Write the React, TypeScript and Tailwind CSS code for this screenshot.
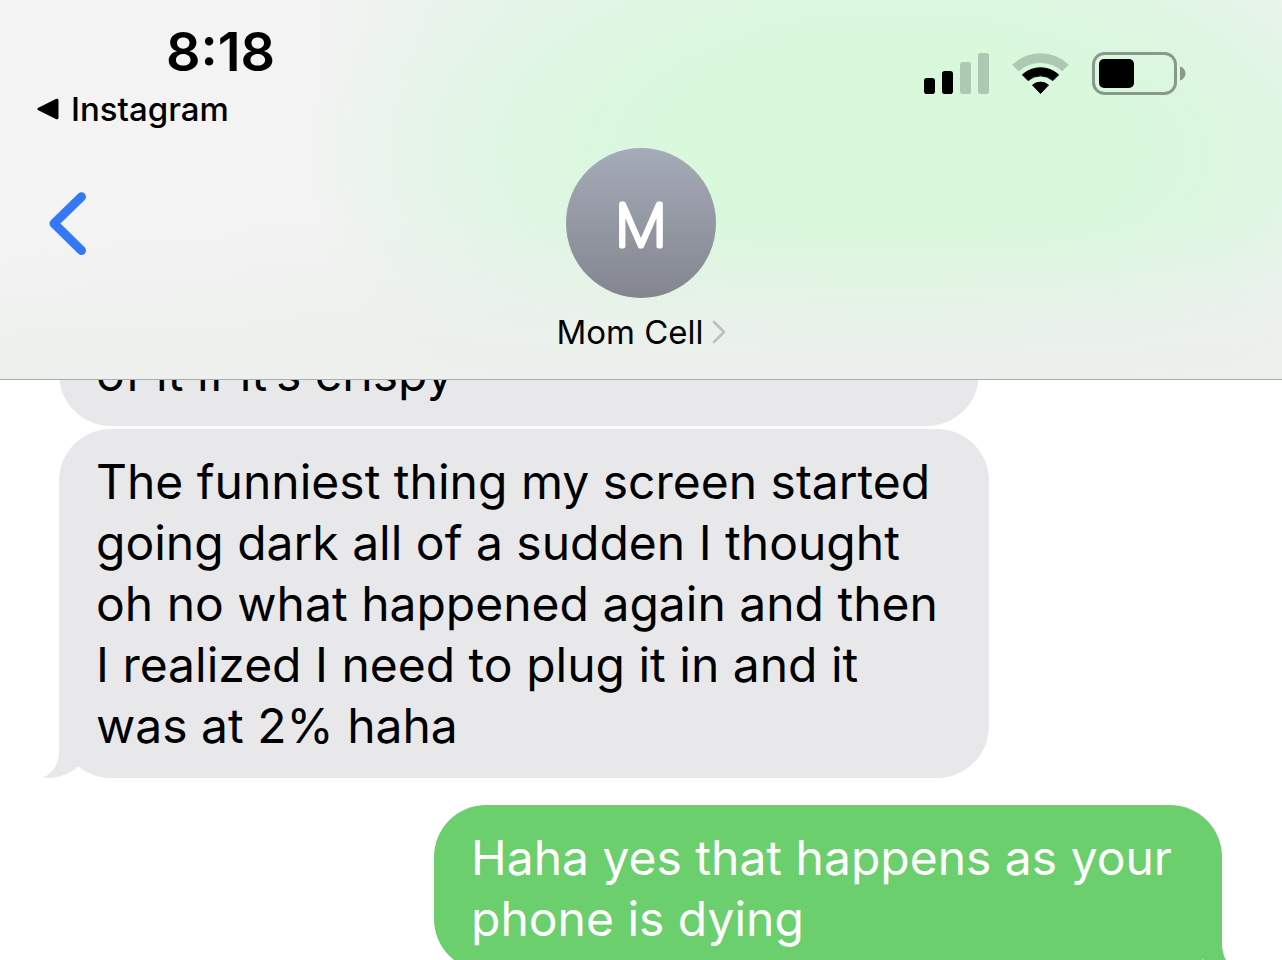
import type { ReactNode } from "react";

function SignalIcon() {
  return (
    <svg width="65" height="43" viewBox="0 0 65 43" role="img" aria-label="Signal: two of four bars">
      <rect x="0" y="26" width="11" height="16" rx="2.8" fill="#000" />
      <rect x="18" y="19" width="11" height="23" rx="2.8" fill="#000" />
      <rect x="36" y="10" width="11" height="32" rx="2.8" fill="#afc8b3" />
      <rect x="54" y="1" width="11" height="41" rx="2.8" fill="#afc8b3" />
    </svg>
  );
}

function WifiIcon() {
  return (
    <svg width="57" height="43" viewBox="0 0 57 43" role="img" aria-label="Wi-Fi">
      <g strokeLinejoin="round" strokeWidth="1">
        <path
          d="M0.7 12.8 A40.5 40.5 0 0 1 56.3 12.8 L50.3 18.8 A32.6 32.6 0 0 0 6.7 18.8 Z"
          fill="#afc8b3"
          stroke="#afc8b3"
        />
        <path
          d="M10.4 22.8 A26.8 26.8 0 0 1 46.6 22.8 L40.9 28.6 A18.6 18.6 0 0 0 16.1 28.6 Z"
          fill="#000"
          stroke="#000"
        />
        <path d="M20.5 33 A12.5 12.5 0 0 1 36.5 33 L28.5 41.5 Z" fill="#000" stroke="#000" />
      </g>
    </svg>
  );
}

function BatteryIcon() {
  return (
    <svg width="94" height="43" viewBox="0 0 94 43" role="img" aria-label="Battery">
      <rect x="1.5" y="1.5" width="82" height="40" rx="11" fill="none" stroke="#879a8b" strokeWidth="3" />
      <rect x="7" y="7" width="35" height="29" rx="5" fill="#000" />
      <path d="M88 14.5 C91.5 15.5 93.5 18.2 93.5 21.5 C93.5 24.8 91.5 27.5 88 28.5 Z" fill="#879a8b" />
    </svg>
  );
}

function Tail({ side }: { side: "left" | "right" }) {
  return (
    <svg
      className={
        side === "left"
          ? "absolute bottom-0 -left-4 text-[#e8e8ea]"
          : "absolute -right-4 bottom-0 -scale-x-100 text-[#6bcf6e]"
      }
      width="36"
      height="52"
      viewBox="0 0 36 52"
      aria-hidden="true"
    >
      <path
        d="M16 0 L16 24 C16 38 10 47.5 0 51.4 C13 53.5 26 48.5 35 40.5 L36 30 L17 0 Z"
        fill="currentColor"
      />
    </svg>
  );
}

function Bubble({ className, children }: { className: string; children: ReactNode }) {
  return (
    <li
      className={`relative rounded-[52px] px-[37px] pt-[22px] pb-[22px] text-[48px] leading-[61px] ${className}`}
    >
      {children}
    </li>
  );
}

export default function App() {
  return (
    <div className="flex h-screen flex-col overflow-hidden bg-white font-['Inter',sans-serif] text-black">
      <header className="shrink-0 border-b border-[#a9afaa] bg-[linear-gradient(to_bottom,#edf0ed00_58%,#edf0ed99_82%,#edf0ed_100%),radial-gradient(ellipse_46%_76%_at_70%_40%,#d8f8db_0%,#d9f8dc_40%,#dff6e3_65%,#e4f5e899_82%,#e8f3ea00_100%),linear-gradient(to_right,#f4f4f4_0%,#f2f3f2_25%,#e6f4e9_42%,#e4f5e7_80%,#f0f3f1_100%)] pb-[25px]">
        <div className="flex items-start justify-between pr-24 pl-[37px]">
          <div className="pt-5">
            <div className="pl-[129px] text-[54px] leading-[64px] font-semibold">8:18</div>
            <a href="#instagram" className="flex items-center gap-3 text-[33px] leading-[50px] font-medium">
              <svg width="22" height="22" viewBox="0 0 22 22" aria-hidden="true">
                <path
                  d="M2 11 L20 2.2 L20 19.8 Z"
                  fill="#000"
                  stroke="#000"
                  strokeWidth="3"
                  strokeLinejoin="round"
                />
              </svg>
              Instagram
            </a>
          </div>
          <div className="flex items-center gap-[23px] pt-[52px]">
            <SignalIcon />
            <WifiIcon />
            <BatteryIcon />
          </div>
        </div>

        <div className="grid grid-cols-[1fr_auto_1fr] items-start pt-[14px]">
          <button type="button" aria-label="Back" className="mt-11 ml-12 w-fit">
            <svg className="block" width="38" height="64" viewBox="0 0 38 64" aria-hidden="true">
              <path
                d="M33.5 4.8 L6 31.5 L33.5 58.5"
                fill="none"
                stroke="#3478f6"
                strokeWidth="9"
                strokeLinecap="round"
                strokeLinejoin="round"
              />
            </svg>
          </button>
          <button type="button" className="flex flex-col items-center gap-3">
            <span className="flex size-[150px] items-center justify-center rounded-full bg-linear-to-b from-[#a6abb9] to-[#83868f]">
              <svg width="100" height="100" viewBox="0 0 100 100" aria-hidden="true">
                <text
                  x="50"
                  y="73"
                  textAnchor="middle"
                  fill="#fff"
                  stroke="#fff"
                  strokeWidth="5"
                  strokeLinejoin="round"
                  className="text-[58px] font-thin"
                >
                  M
                </text>
              </svg>
            </span>
            <span className="flex items-center gap-2 text-[33px] leading-[44px]">
              Mom Cell
              <svg width="14" height="24" viewBox="0 0 14 24" aria-hidden="true">
                <path
                  d="M2 2 L12 12 L2 22"
                  fill="none"
                  stroke="#b9c2bb"
                  strokeWidth="2.6"
                  strokeLinecap="round"
                  strokeLinejoin="round"
                />
              </svg>
            </span>
          </button>
        </div>
      </header>

      <main className="min-h-0 flex-1 overflow-hidden">
        <ul className="-mt-[59px] flex flex-col pr-[60px] pl-[59px]">
          <Bubble className="w-full max-w-[920px] self-start bg-[#e8e8ea]">of it if it’s crispy</Bubble>
          <Bubble className="mt-[3px] w-full max-w-[930px] self-start bg-[#e8e8ea]">
            The funniest thing my screen started
            <br />
            going dark all of a sudden I thought
            <br />
            oh no what happened again and then
            <br />
            I realized I need to plug it in and it
            <br />
            was at 2% haha
            <Tail side="left" />
          </Bubble>
          <Bubble className="mt-[27px] w-full max-w-[788px] self-end bg-[#6bcf6e] text-white">
            Haha yes that happens as your
            <br />
            phone is dying
            <Tail side="right" />
          </Bubble>
        </ul>
      </main>
    </div>
  );
}
